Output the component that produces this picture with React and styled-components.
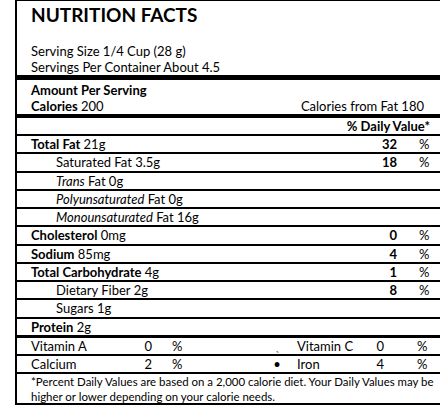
import React from "react";
import styled, { createGlobalStyle } from "styled-components";

const Global = createGlobalStyle`
  html, body { margin: 0; padding: 0; background: #fff; overflow: hidden; }
  body { font-family: Lato, "Liberation Sans", sans-serif; color: #000; }
`;

const Label = styled.div`
  margin-left: 15px;
  width: 432px;
  border-left: 2px solid #000;
  border-top: 1px solid #000;
  border-bottom: 2px solid #000;
  border-right: 2px solid #000;
  font-size: 13px;
  line-height: 16px;
`;

const Header = styled.div`
  padding: 2px 0 0 14px;
`;

const Title = styled.h1`
  margin: 0;
  font-size: 19px;
  line-height: 24px;
  font-weight: 700;
`;

const Serving = styled.div`
  margin-top: 16px;
`;

const Bar = styled.div`
  height: ${(p) => p.$h}px;
  background: #000;
`;

const Amount = styled.div`
  padding: 2px 25px 0 14px;
`;

const Line = styled.div`
  display: flex;
  justify-content: space-between;
`;

const B = styled.b`
  font-weight: 700;
`;

const I = styled.i`
  font-style: italic;
`;

const DVHead = styled.div`
  height: 16px;
  padding-right: 19px;
  text-align: right;
  font-weight: 700;
  border-bottom: 2px solid #000;
`;

const Row = styled.div`
  display: grid;
  grid-template-columns: 1fr 40px 22px 30px;
  height: 16.25px;
  border-bottom: ${(p) => (p.$rule === 0 ? "none" : "2px solid #000")};
`;

const Name = styled.div`
  padding-left: ${(p) => 14 + (p.$indent ? 25 : 0)}px;
  white-space: nowrap;
`;

const Num = styled.div`
  text-align: right;
  font-weight: 700;
`;

const Pct = styled.div`
  grid-column: 4;
`;

const VitRow = styled.div`
  display: grid;
  grid-template-columns: 113px 22px 105px 40px 62px 25px 1fr;
  height: 16px;
  border-bottom: 2px solid #000;
  white-space: nowrap;
`;

const VitName = styled.div`
  padding-left: 14px;
`;

const VitNum = styled.div`
  text-align: right;
`;

const VitPct = styled.div`
  padding-left: ${(p) => p.$pad}px;
`;

const Dot = styled.div`
  text-align: center;
  color: ${(p) => (p.$faint ? "#777" : "#000")};
`;

const Foot = styled.div`
  height: 29px;
  padding-left: 14px;
  font-size: 11.45px;
  line-height: 15px;
  white-space: nowrap;
`;

const nutrients = [
  { label: <><B>Total Fat</B> 21g</>, dv: "32" },
  { label: <>Saturated Fat 3.5g</>, dv: "18", indent: true },
  { label: <><I>Trans</I> Fat 0g</>, indent: true },
  { label: <><I>Polyunsaturated</I> Fat 0g</>, indent: true },
  { label: <><I>Monounsaturated</I> Fat 16g</>, indent: true },
  { label: <><B>Cholesterol</B> 0mg</>, dv: "0" },
  { label: <><B>Sodium</B> 85mg</>, dv: "4" },
  { label: <><B>Total Carbohydrate</B> 4g</>, dv: "1" },
  { label: <>Dietary Fiber 2g</>, dv: "8", indent: true },
  { label: <>Sugars 1g</>, indent: true },
  { label: <><B>Protein</B> 2g</>, last: true },
];

const vitamins = [
  ["Vitamin A", "0", "Vitamin C", "0", true],
  ["Calcium", "2", "Iron", "4", false],
];

export default function App() {
  return (
    <>
      <Global />
      <Label>
        <Header>
          <Title>NUTRITION FACTS</Title>
          <Serving>
            Serving Size 1/4 Cup (28 g)
            <br />
            Servings Per Container About 4.5
          </Serving>
        </Header>
        <Bar $h={5} />
        <Amount>
          <B>Amount Per Serving</B>
          <Line>
            <span>
              <B>Calories</B> 200
            </span>
            <span>Calories from Fat 180</span>
          </Line>
        </Amount>
        <Bar $h={4} />
        <DVHead>% Daily Value*</DVHead>
        {nutrients.map((n, i) => (
          <Row key={i} $rule={n.last ? 0 : 1}>
            <Name $indent={n.indent}>{n.label}</Name>
            {n.dv && <Num>{n.dv}</Num>}
            {n.dv && <Pct>%</Pct>}
          </Row>
        ))}
        <Bar $h={3} />
        {vitamins.map(([a, av, c, cv, faint]) => (
          <VitRow key={a}>
            <VitName>{a}</VitName>
            <VitNum>{av}</VitNum>
            <VitPct $pad={20}>%</VitPct>
            <Dot $faint={faint}>{faint ? "ˎ" : "•"}</Dot>
            <div>{c}</div>
            <VitNum>{cv}</VitNum>
            <VitPct $pad={33}>%</VitPct>
          </VitRow>
        ))}
        <Foot>
          *Percent Daily Values are based on a 2,000 calorie diet. Your Daily Values may be
          <br />
          higher or lower depending on your calorie needs.
        </Foot>
      </Label>
    </>
  );
}
